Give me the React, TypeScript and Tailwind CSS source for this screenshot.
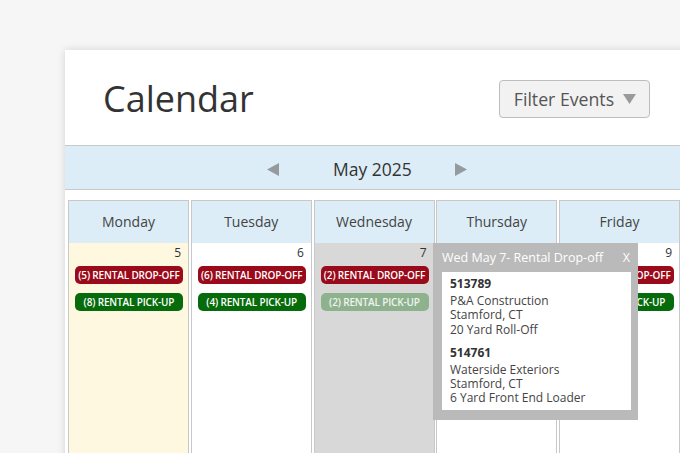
import React from 'react';

type Day = {
  name: string;
  date: number;
  bg: string;
  dropOff: string;
  pickUp: string;
  faded?: boolean;
};

const days: Day[] = [
  { name: 'Monday', date: 5, bg: 'bg-[#fef8e1]', dropOff: '(5) RENTAL DROP-OFF', pickUp: '(8) RENTAL PICK-UP' },
  { name: 'Tuesday', date: 6, bg: 'bg-white', dropOff: '(6) RENTAL DROP-OFF', pickUp: '(4) RENTAL PICK-UP' },
  { name: 'Wednesday', date: 7, bg: 'bg-[#d8d8d8]', dropOff: '(2) RENTAL DROP-OFF', pickUp: '(2) RENTAL PICK-UP', faded: true },
  { name: 'Thursday', date: 8, bg: 'bg-white', dropOff: '(3) RENTAL DROP-OFF', pickUp: '(5) RENTAL PICK-UP' },
  { name: 'Friday', date: 9, bg: 'bg-white', dropOff: '(4) RENTAL DROP-OFF', pickUp: '(3) RENTAL PICK-UP' },
];

const Pill: React.FC<{ label: string; className: string }> = ({ label, className }) => (
  <div className={`ml-[6px] w-[108px] h-[18px] rounded-[5px] flex items-center justify-center text-[10px] font-semibold tracking-[-0.15px] whitespace-nowrap ${className}`}>
    {label}
  </div>
);

const DayColumn: React.FC<{ day: Day }> = ({ day }) => (
  <div className="w-[121px] shrink-0 border-x border-t border-[#c8c8c8]">
    <div className="h-[42px] bg-[#dcedf7] flex items-center justify-center pb-[1px] text-[14px] text-[#444]">
      {day.name}
    </div>
    <div className={`h-[230px] pt-[2px] ${day.bg}`}>
      <div className="text-right pr-[7px] text-[12px] leading-[16px] text-[#333]">{day.date}</div>
      <div className="mt-[5px] flex flex-col gap-[9px]">
        <Pill label={day.dropOff} className="bg-[#9a0a1b] text-white" />
        <Pill
          label={day.pickUp}
          className={day.faded ? 'bg-[#8fb28e] text-[#eef4ee]' : 'bg-[#066b0a] text-white'}
        />
      </div>
    </div>
  </div>
);

const Popover: React.FC = () => (
  <div className="absolute left-[368px] top-[193px] w-[205px] h-[177px] bg-[#bababa] pl-[9px] pr-[7px]">
    <div className="flex items-center justify-between h-[29px] pt-[1px] text-white text-[12.5px]">
      <span>Wed May 7- Rental Drop-off</span>
      <span className="pr-[1px]">X</span>
    </div>
    <div className="bg-white h-[138px] pl-[8px] pt-[4px] text-[#444] text-[12px] leading-[14.3px]">
      <div className="font-bold text-[#333] leading-[15px]">513789</div>
      <div className="mt-[3px]">P&amp;A Construction</div>
      <div>Stamford, CT</div>
      <div>20 Yard Roll-Off</div>
      <div className="mt-[8px] font-bold text-[#333] leading-[15px]">514761</div>
      <div className="mt-[3px]">Waterside Exteriors</div>
      <div>Stamford, CT</div>
      <div>6 Yard Front End Loader</div>
    </div>
  </div>
);

const App: React.FC = () => {
  return (
    <div className="w-[680px] h-[453px] overflow-hidden bg-[#f6f6f6] pt-[50px] pl-[65px] font-['Open_Sans',sans-serif]">
      <div className="relative w-[640px] h-[420px] bg-white shadow-[0_0_8px_rgba(0,0,0,0.14)]">
        <div className="h-[95px] flex items-center pt-[3px] pl-[38px]">
          <h1 className="text-[36px] text-[#333] leading-none">Calendar</h1>
          <button className="ml-[245px] w-[151px] h-[38px] rounded-[4px] border border-[#bdbdbd] bg-[#f2f2f2] flex items-center pl-[14px] gap-[9px] text-[17.7px] text-[#555]">
            Filter Events
            <svg width="13" height="10" viewBox="0 0 13 10">
              <polygon points="0,0 13,0 6.5,10" fill="#9a9a9a" />
            </svg>
          </button>
        </div>

        <div className="h-[45px] border-y border-[#c9c9c9] bg-[#dcedf7] flex items-center pt-[3px] pl-[202px]">
          <svg width="12" height="13" viewBox="0 0 12 13">
            <polygon points="12,0 12,13 0,6.5" fill="#949a9e" />
          </svg>
          <span className="ml-[54px] text-[17.5px] text-[#333]">May 2025</span>
          <svg className="ml-[43px]" width="12" height="13" viewBox="0 0 12 13">
            <polygon points="0,0 0,13 12,6.5" fill="#949a9e" />
          </svg>
        </div>

        <div className="mt-[10px] pl-[3px] flex gap-[1.75px]">
          {days.map((d) => (
            <DayColumn key={d.name} day={d} />
          ))}
        </div>

        <Popover />
      </div>
    </div>
  );
};

export default App;
